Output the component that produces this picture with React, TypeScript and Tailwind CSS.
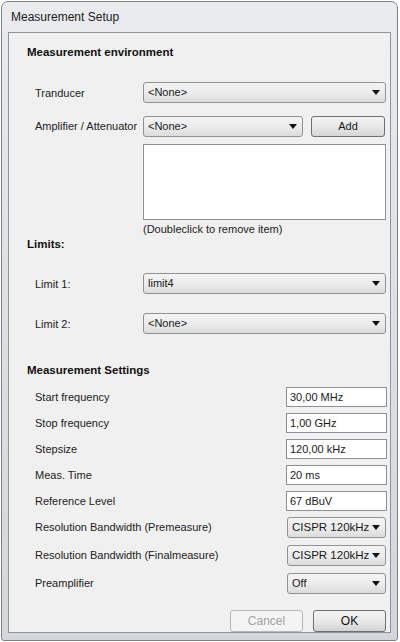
import React from 'react';

const FONT = { fontFamily: "'Liberation Sans', Arial, sans-serif" };

function Arrow() {
  return (
    <svg width="8" height="5" viewBox="0 0 8 5" className="shrink-0">
      <path d="M0 0 H8 L4 5 Z" fill="#111" />
    </svg>
  );
}

function Combo({ value, className = '', big = false }: { value: string; className?: string; big?: boolean }) {
  return (
    <div
      className={`h-[21px] flex items-center justify-between pl-[4px] pr-[5px] rounded-[3px] border border-[#8f9194] bg-gradient-to-b from-[#f4f4f4] via-[#ececec] to-[#dcdcdc] text-[#1a1a1a] whitespace-nowrap ${big ? 'text-[11.5px]' : 'text-[11px]'} ${className}`}
    >
      <span className="leading-none">{value}</span>
      <Arrow />
    </div>
  );
}

function Field({ value }: { value: string }) {
  return (
    <div className="w-[101px] h-[20px] flex items-center px-[3px] border border-[#8d9197] bg-white text-[11px] text-[#1a1a1a] leading-none">
      {value}
    </div>
  );
}

function Label({ children }: { children: React.ReactNode }) {
  return <span className="text-[11px] text-[#222] leading-none whitespace-nowrap">{children}</span>;
}

function Heading({ children, className = '' }: { children: React.ReactNode; className?: string }) {
  return <div className={`pl-[18px] text-[11.5px] font-bold text-[#111] leading-[14px] ${className}`}>{children}</div>;
}

const SETTINGS = [
  { label: 'Start frequency', value: '30,00 MHz' },
  { label: 'Stop frequency', value: '1,00 GHz' },
  { label: 'Stepsize', value: '120,00 kHz' },
  { label: 'Meas. Time', value: '20 ms' },
  { label: 'Reference Level', value: '67 dBuV' },
];

const CHOICES = [
  { label: 'Resolution Bandwidth (Premeasure)', value: 'CISPR 120kHz', big: true },
  { label: 'Resolution Bandwidth (Finalmeasure)', value: 'CISPR 120kHz', big: true },
  { label: 'Preamplifier', value: 'Off', big: false },
];

export default function App() {
  return (
    <div className="w-[400px] h-[642px] bg-white relative overflow-hidden" style={FONT}>
      {/* window frame */}
      <div className="ml-[1px] mt-[1px] w-[397px] h-[640px] rounded-t-[7px] rounded-b-[3px] border border-[#7d8186] bg-gradient-to-b from-[#e9ebee] via-[#dde0e4] to-[#d3d7dc] flex flex-col">
        <div className="h-[30px] flex items-center pl-[9px] text-[12px] text-[#1c1c1c]">Measurement Setup</div>

        {/* client area */}
        <div className="ml-[6px] w-[383px] h-[601px] border border-[#8e949b] bg-[#f0f0f0] flex flex-col">
          <Heading className="mt-[12px]">Measurement environment</Heading>

          <div className="mt-[21px] flex items-center pl-[26px]">
            <div className="w-[108px]"><Label>Tranducer</Label></div>
            <Combo value="<None>" className="w-[243px]" />
          </div>

          <div className="mt-[12px] flex items-center pl-[26px]">
            <div className="w-[108px] -mt-[3px]"><Label>Amplifier / Attenuator</Label></div>
            <Combo value="<None>" className="w-[160px]" />
            <button className="ml-[8px] w-[74px] h-[21px] rounded-[3px] border border-[#707070] bg-gradient-to-b from-[#f3f3f3] via-[#e8e8e8] to-[#d6d6d6] text-[11px] text-[#1a1a1a] leading-none">
              Add
            </button>
          </div>

          <div className="mt-[7px] ml-[134px] w-[243px] h-[84px] border border-[#8d9197] bg-white" />
          <div className="mt-[3px] ml-[134px] text-[11px] leading-[12px] text-[#222]">(Doubleclick to remove item)</div>

          <Heading className="mt-[2px]">Limits:</Heading>

          <div className="mt-[20px] flex items-center pl-[26px]">
            <div className="w-[108px]"><Label>Limit 1:</Label></div>
            <Combo value="limit4" className="w-[243px]" />
          </div>
          <div className="mt-[16px] flex items-center pl-[26px]">
            <div className="w-[108px]"><Label>Limit 2:</Label></div>
            <Combo value="<None>" className="w-[243px]" />
          </div>

          <Heading className="mt-[28px]">Measurement Settings</Heading>

          <div className="mt-[10px] flex flex-col gap-[6px] pl-[26px] pr-[3px]">
            {SETTINGS.map((s) => (
              <div key={s.label} className="flex items-center justify-between">
                <Label>{s.label}</Label>
                <Field value={s.value} />
              </div>
            ))}
          </div>

          <div className="mt-[6px] flex flex-col gap-[7px] pl-[26px] pr-[4px]">
            {CHOICES.map((c, i) => (
              <div key={i} className="flex items-center justify-between">
                <Label>{c.label}</Label>
                <Combo value={c.value} big={c.big} className="w-[99px]" />
              </div>
            ))}
          </div>

          <div className="mt-[16px] flex justify-end gap-[10px] pr-[4px]">
            <button className="w-[73px] h-[22px] rounded-[3px] border border-[#b5b9bd] bg-[#f4f4f4] text-[12px] text-[#a2a2a2] leading-none">
              Cancel
            </button>
            <button className="w-[73px] h-[22px] rounded-[3px] border border-[#707070] bg-gradient-to-b from-[#f3f3f3] via-[#e9e9e9] to-[#d3d3d3] text-[12px] text-[#111] leading-none">
              OK
            </button>
          </div>
        </div>
      </div>
    </div>
  );
}
